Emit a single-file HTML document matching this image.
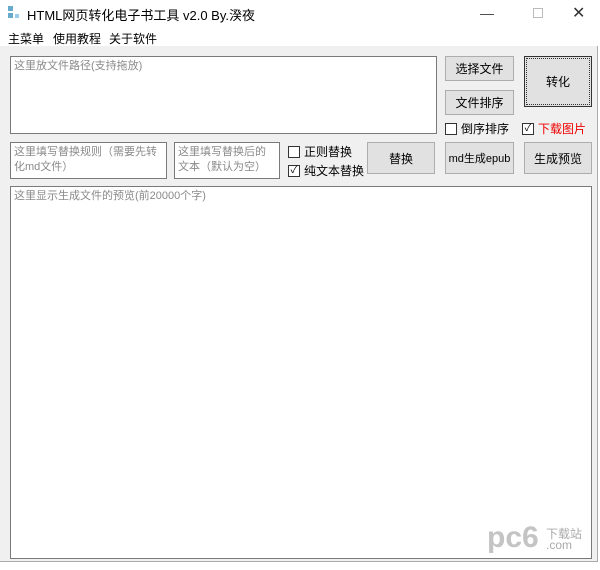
<!DOCTYPE html>
<html><head><meta charset="utf-8"><style>
*{box-sizing:border-box;margin:0;padding:0}
body{width:600px;height:570px;background:#fff;font-family:"Liberation Sans","Noto Sans CJK SC",sans-serif;font-size:12px;color:#000;position:relative;overflow:hidden}
.a{position:absolute}
.body{left:0;top:46px;width:598px;height:516px;background:#f0f0f0;border-right:1px solid #aaa;border-bottom:1px solid #aaa}
.tb{background:#fff;border:1px solid #7a7a7a;color:#8a8a8a;padding:2px 3px;line-height:15px;font-size:11px}
.btn{background:#e1e1e1;border:1px solid #adadad;text-align:center;display:flex;align-items:center;justify-content:center}
.cb{width:12px;height:12px;border:1px solid #333;background:#fff;display:inline-block;vertical-align:middle;font-size:10px;line-height:10px;text-align:center}
.lbl{display:flex;align-items:center;gap:4px}
</style></head><body>
<div class="a" style="left:8px;top:6px;width:12px;height:14px">
<div class="a" style="left:0;top:0;width:5px;height:5px;background:#6ac"></div>
<div class="a" style="left:0;top:7px;width:5px;height:5px;background:#6ac"></div>
<div class="a" style="left:7px;top:8px;width:4px;height:4px;background:#9ce"></div></div>
<div class="a" style="left:27px;top:5px;font-size:13px">HTML网页转化电子书工具 v2.0 By.湀夜</div>
<div class="a" style="left:480px;top:5px;color:#444;font-size:14px">—</div>
<div class="a" style="left:533px;top:8px;width:10px;height:10px;border:1px solid #bbb"></div>
<div class="a" style="left:572px;top:3px;font-size:16px;color:#333">✕</div>
<div class="a" style="left:8px;top:30px">主菜单</div>
<div class="a" style="left:53px;top:30px">使用教程</div>
<div class="a" style="left:109px;top:30px">关于软件</div>
<div class="a body"></div>
<div class="a tb" style="left:10px;top:56px;width:427px;height:78px">这里放文件路径(支持拖放)</div>
<div class="a btn" style="left:445px;top:56px;width:69px;height:25px">选择文件</div>
<div class="a btn" style="left:445px;top:90px;width:69px;height:25px">文件排序</div>
<div class="a btn" style="left:524px;top:56px;width:68px;height:51px;border:1px solid #333;outline:1px dotted #333;outline-offset:-3px">转化</div>
<div class="a lbl" style="left:445px;top:120px"><span class="cb"></span>倒序排序</div>
<div class="a lbl" style="left:522px;top:120px;color:#e00"><span class="cb" style="color:#000">✓</span>下载图片</div>
<div class="a tb" style="left:10px;top:142px;width:157px;height:37px">这里填写替换规则（需要先转化md文件）</div>
<div class="a tb" style="left:174px;top:142px;width:106px;height:37px">这里填写替换后的文本（默认为空）</div>
<div class="a lbl" style="left:288px;top:143px"><span class="cb"></span>正则替换</div>
<div class="a lbl" style="left:288px;top:162px"><span class="cb">✓</span>纯文本替换</div>
<div class="a btn" style="left:367px;top:142px;width:68px;height:32px">替换</div>
<div class="a btn" style="left:445px;top:142px;width:69px;height:32px;font-size:11px">md生成epub</div>
<div class="a btn" style="left:524px;top:142px;width:68px;height:32px">生成预览</div>
<div class="a tb" style="left:10px;top:186px;width:582px;height:373px">这里显示生成文件的预览(前20000个字)</div>
<div class="a" style="left:487px;top:521px;font-size:30px;font-weight:bold;color:#c4c4c4">pc6</div>
<div class="a" style="left:546px;top:529px;font-size:12px;color:#aaa;line-height:11px">下载站<br>.com</div>
</body></html>
